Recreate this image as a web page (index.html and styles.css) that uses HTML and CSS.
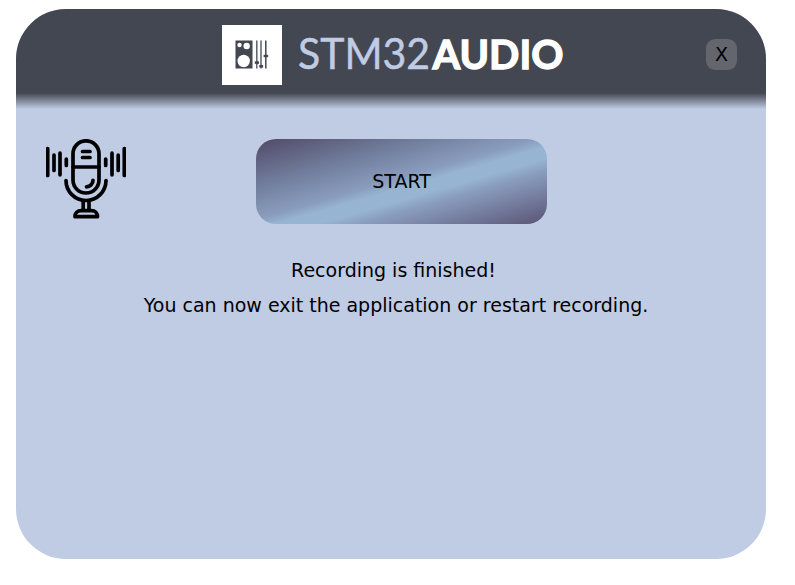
FILE: index.html
```
<!DOCTYPE html>
<html lang="en">
<head>
<meta charset="utf-8">
<title>STM32 Audio</title>
<link rel="stylesheet" href="styles.css">
</head>
<body>
<main class="window">
  <header class="header">
    <div class="brand">
      <svg class="badge" viewBox="0 0 60 60" aria-hidden="true">
        <rect width="60" height="60" fill="#fff"/>
        <rect x="13.500" y="15.500" width="17" height="28" fill="#434751"/>
        <g fill="#fff"><circle cx="17.500" cy="20" r="2.200"/><circle cx="24.700" cy="21" r="3.200"/><circle cx="21.700" cy="36" r="6.200"/></g>
        <g stroke="#5c606a" stroke-width="1.500"><path d="M34.800 15.500v28M39 15.500v28"/><path stroke="#434751" d="M43.800 15.500v28"/></g>
        <g fill="#434751"><rect x="32.800" y="36.300" width="4.200" height="2.600"/><rect x="37.300" y="40" width="3.800" height="2.600"/><rect x="41.600" y="29.800" width="4.600" height="2.400"/></g>
      </svg>
      <svg class="wordmark" viewBox="0 0 285 60">
        <text class="wordmark-light" x="6" y="44.300" textLength="132" lengthAdjust="spacingAndGlyphs">STM32</text>
        <text class="wordmark-bold" x="140.500" y="44.300" textLength="131" lengthAdjust="spacingAndGlyphs">AUDIO</text>
      </svg>
    </div>
    <button class="close">X</button>
  </header>
  <section class="content">
    <svg class="mic" viewBox="0 0 80 80" aria-hidden="true">
      <g fill="none" stroke="#000" stroke-linecap="round" stroke-linejoin="round" stroke-width="3.700">
        <path d="M1.700 9.500v27M8 16v15.500M14 14.200v21.600M20.300 20v6.500M59.700 20v6.500M66 14.200v21.600M72.200 16v15.500M78.300 9.500v27"/>
        <rect x="27" y="1.800" width="26" height="52.200" rx="13"/>
        <path d="M27 28h26M36.500 12.500h7.500M36.500 18.500h7.500M40.500 47.800a6.500 6.500 0 0 0 6.500-6.500"/>
        <path d="M20 41.500a20 20 0 0 0 40 0M37.200 62.500v8.500M43 62.500v8.500"/>
        <path d="M29 77.700h22.500c0-3.500-2.500-6-6-6H35c-3.500 0-6 2.500-6 6z"/>
      </g>
    </svg>
    <button class="start">START</button>
    <div class="message">
      <p class="status">Recording is finished!</p>
      <p>You can now exit the application or restart recording.</p>
    </div>
  </section>
</main>
</body>
</html>
```
FILE: styles.css
```
body {
  margin: 0;
  background: #fff;
  color: #000;
  font: 19px/35px "DejaVu Sans", sans-serif;
}

.window {
  width: 750px;
  height: 550px;
  margin: 9px 0 0 16px;
  border-radius: 50px;
  overflow: hidden;
  background: #c0cbe4;
}

.header {
  display: flex;
  align-items: center;
  justify-content: space-between;
  box-sizing: border-box;
  height: 100px;
  padding: 0 29px 9px 206px;
  background: linear-gradient(#434751 84px, #c0cbe4 100px);
}

.brand {
  display: flex;
}

.badge {
  width: 60px;
  height: 60px;
}

.wordmark {
  width: 285px;
  height: 60px;
  margin-left: 10px;
  font-family: Lato, sans-serif;
  font-size: 42px;
}

.wordmark-light {
  fill: #c0cbe4;
  stroke: #c0cbe4;
  stroke-width: 0.5px;
}

.wordmark-bold {
  fill: #fff;
  stroke: #fff;
  stroke-width: 1.3px;
  font-size: 41px;
  font-weight: 700;
}

button {
  padding: 0;
  border: 0;
  color: #000;
  font: inherit;
}

.close {
  width: 31px;
  height: 31px;
  border-radius: 9px;
  background: #63666d;
  line-height: 31px;
}

.content {
  display: grid;
  grid-template-columns: 80px 291px;
  column-gap: 130px;
  padding: 30px 30px 0;
}

.mic {
  width: 80px;
  height: 80px;
}

.start {
  height: 85px;
  border-radius: 20px;
  background: linear-gradient(164deg, #514968, #6d7896 25%, #8a9dbf 48%, #97b5d2 54%, #97b5d2 61%, #8a9dbf 68%, #5a5475);
}

.message {
  grid-column: 1 / -1;
  width: 700px;
  margin-top: 29px;
  text-align: center;
}

.message p {
  margin: 0;
}

.status {
  padding-right: 5px;
}
```
